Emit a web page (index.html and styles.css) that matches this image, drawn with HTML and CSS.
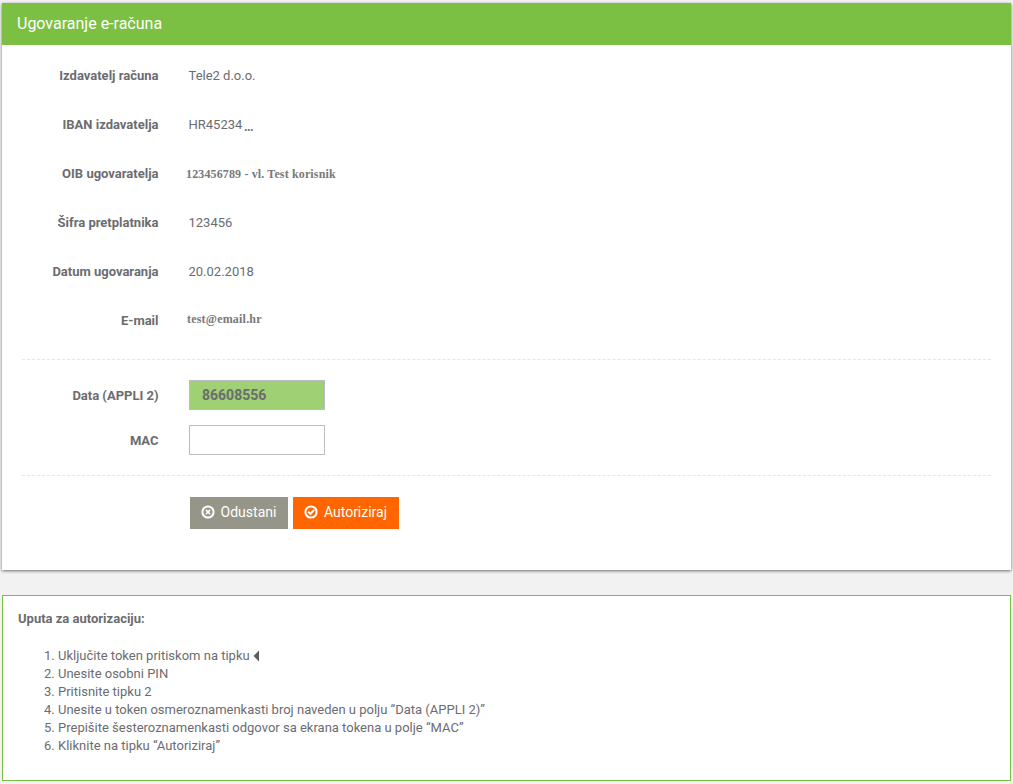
FILE: index.html
```html
<!DOCTYPE html>
<html lang="hr">
<head>
<meta charset="utf-8">
<title>Ugovaranje e-računa</title>
<link rel="stylesheet" href="styles.css">
</head>
<body>
<main class="page">
  <section class="card">
    <h1 class="card-title">Ugovaranje e-računa</h1>
    <div class="card-body">
      <dl class="details">
        <div class="row"><dt class="label">Izdavatelj računa</dt><dd class="value">Tele2 d.o.o.</dd></div>
        <div class="row"><dt class="label">IBAN izdavatelja</dt><dd class="value">HR45234<span class="dots">...</span></dd></div>
        <div class="row"><dt class="label">OIB ugovaratelja</dt><dd class="value serif serif-oib">123456789 - vl. Test korisnik</dd></div>
        <div class="row"><dt class="label">Šifra pretplatnika</dt><dd class="value">123456</dd></div>
        <div class="row"><dt class="label">Datum ugovaranja</dt><dd class="value">20.02.2018</dd></div>
        <div class="row"><dt class="label">E-mail</dt><dd class="value serif serif-mail">test@email.hr</dd></div>
      </dl>
      <div class="fields">
        <div class="field-row">
          <label class="label" for="data">Data (APPLI 2)</label>
          <input class="input input-data" id="data" type="text" value="86608556" readonly>
        </div>
        <div class="field-row">
          <label class="label" for="mac">MAC</label>
          <input class="input" id="mac" type="text">
        </div>
      </div>
      <div class="actions">
        <button class="btn btn-cancel" type="button">
          <svg class="btn-icon" viewBox="0 0 14 14" aria-hidden="true"><circle cx="7" cy="7" r="5.6" fill="none" stroke="#fff" stroke-width="2"/><path d="M4.9 4.9l4.2 4.2M9.1 4.9l-4.2 4.2" stroke="#fff" stroke-width="1.5" fill="none"/></svg>
          Odustani
        </button>
        <button class="btn btn-confirm" type="button">
          <svg class="btn-icon" viewBox="0 0 14 14" aria-hidden="true"><circle cx="7" cy="7" r="5.6" fill="none" stroke="#fff" stroke-width="2"/><path d="M4.3 6.8l2.1 2.1 3.6-3.9" stroke="#fff" stroke-width="2" fill="none"/></svg>
          Autoriziraj
        </button>
      </div>
    </div>
  </section>
  <section class="help">
    <p class="help-title">Uputa za autorizaciju:</p>
    <ol class="help-list">
      <li>Uključite token pritiskom na tipku <svg class="tri" viewBox="0 0 7 12" aria-hidden="true"><path d="M6 0.5v11L0.5 6z" fill="#5e5e5e"/></svg></li>
      <li>Unesite osobni PIN</li>
      <li>Pritisnite tipku 2</li>
      <li>Unesite u token osmeroznamenkasti broj naveden u polju “Data (APPLI 2)”</li>
      <li>Prepišite šesteroznamenkasti odgovor sa ekrana tokena u polje “MAC”</li>
      <li>Kliknite na tipku “Autoriziraj”</li>
    </ol>
  </section>
</main>
</body>
</html>
```
FILE: styles.css
```css
* { box-sizing: border-box; }
html, body { margin: 0; padding: 0; }
body {
  background: #f2f2f2;
  font-family: Roboto, "Liberation Sans", sans-serif;
  font-size: 13px;
  color: #6b6c70;
}
.page {
  padding: 3px 2px 3px;
  display: flex;
  flex-direction: column;
  gap: 25px;
  height: 784px;
  overflow: hidden;
}
.card {
  background: #fff;
  height: 567px;
  flex: none;
  box-shadow: 0 1px 3px rgba(0, 0, 0, 0.55);
}
.card-title {
  margin: 0;
  height: 42px;
  padding-left: 15px;
  background: #7bc043;
  color: #fff;
  font-size: 16px;
  font-weight: 400;
  line-height: 41px;
}
.card-body { padding: 6px 20px 0; }
.details {
  margin: 0;
  padding-bottom: 14px;
  border-bottom: 1px dashed #e6e6e6;
}
.row {
  display: flex;
  align-items: center;
  height: 49px;
}
.label {
  flex: none;
  width: 136.5px;
  text-align: right;
  font-weight: 700;
  font-size: 13px;
}
.value {
  margin: 0 0 0 30px;
  font-size: 13px;
}
.dots {
  font-family: "Liberation Serif", serif;
  font-weight: 700;
  font-size: 12px;
  position: relative;
  top: 2px;
  margin-left: 2px;
}
.serif {
  font-family: "Liberation Serif", serif;
  font-weight: 700;
  font-size: 12px;
  color: #77787b;
}
.serif-oib { margin-left: 27.5px; letter-spacing: 0.14px; position: relative; top: 1px; }
.serif-mail { margin-left: 28.5px; position: relative; top: -1px; letter-spacing: 0.2px; }
.fields {
  display: flex;
  flex-direction: column;
  gap: 15px;
  padding: 20px 0;
  border-bottom: 1px dashed #e6e6e6;
}
.field-row { display: flex; align-items: center; }
.input {
  display: block;
  width: 136px;
  height: 30px;
  margin-left: 30.5px;
  border: 1px solid #b9bcc0;
  background: #fff;
  padding: 0 12px;
  font-family: inherit;
  font-size: 14px;
  color: #6b6c70;
  outline: none;
  border-radius: 0;
}
.input-data {
  background: #9fd174;
  font-weight: 700;
}
.actions {
  display: flex;
  gap: 5px;
  padding: 21px 0 0 168px;
}
.btn {
  display: flex;
  align-items: center;
  justify-content: center;
  gap: 6px;
  height: 32px;
  border: 0;
  border-radius: 0;
  padding: 0 1px 2px 0;
  color: #fff;
  font-family: inherit;
  font-size: 14px;
  font-weight: 400;
}
.btn-icon { width: 14px; height: 14px; flex: none; }
.btn-cancel { width: 98px; background: #959589; }
.btn-confirm { width: 106px; background: #ff6600; }
.help {
  flex: none;
  height: 186px;
  background: #fff;
  border: 1px solid #7bc043;
  padding: 15px;
  font-size: 13px;
}
.help-title {
  margin: 0;
  font-weight: 700;
  line-height: 16px;
}
.help-list {
  margin: 20px 0 0;
  padding-left: 40px;
  line-height: 18px;
}
.tri { width: 7px; height: 12px; vertical-align: -2px; }
```
